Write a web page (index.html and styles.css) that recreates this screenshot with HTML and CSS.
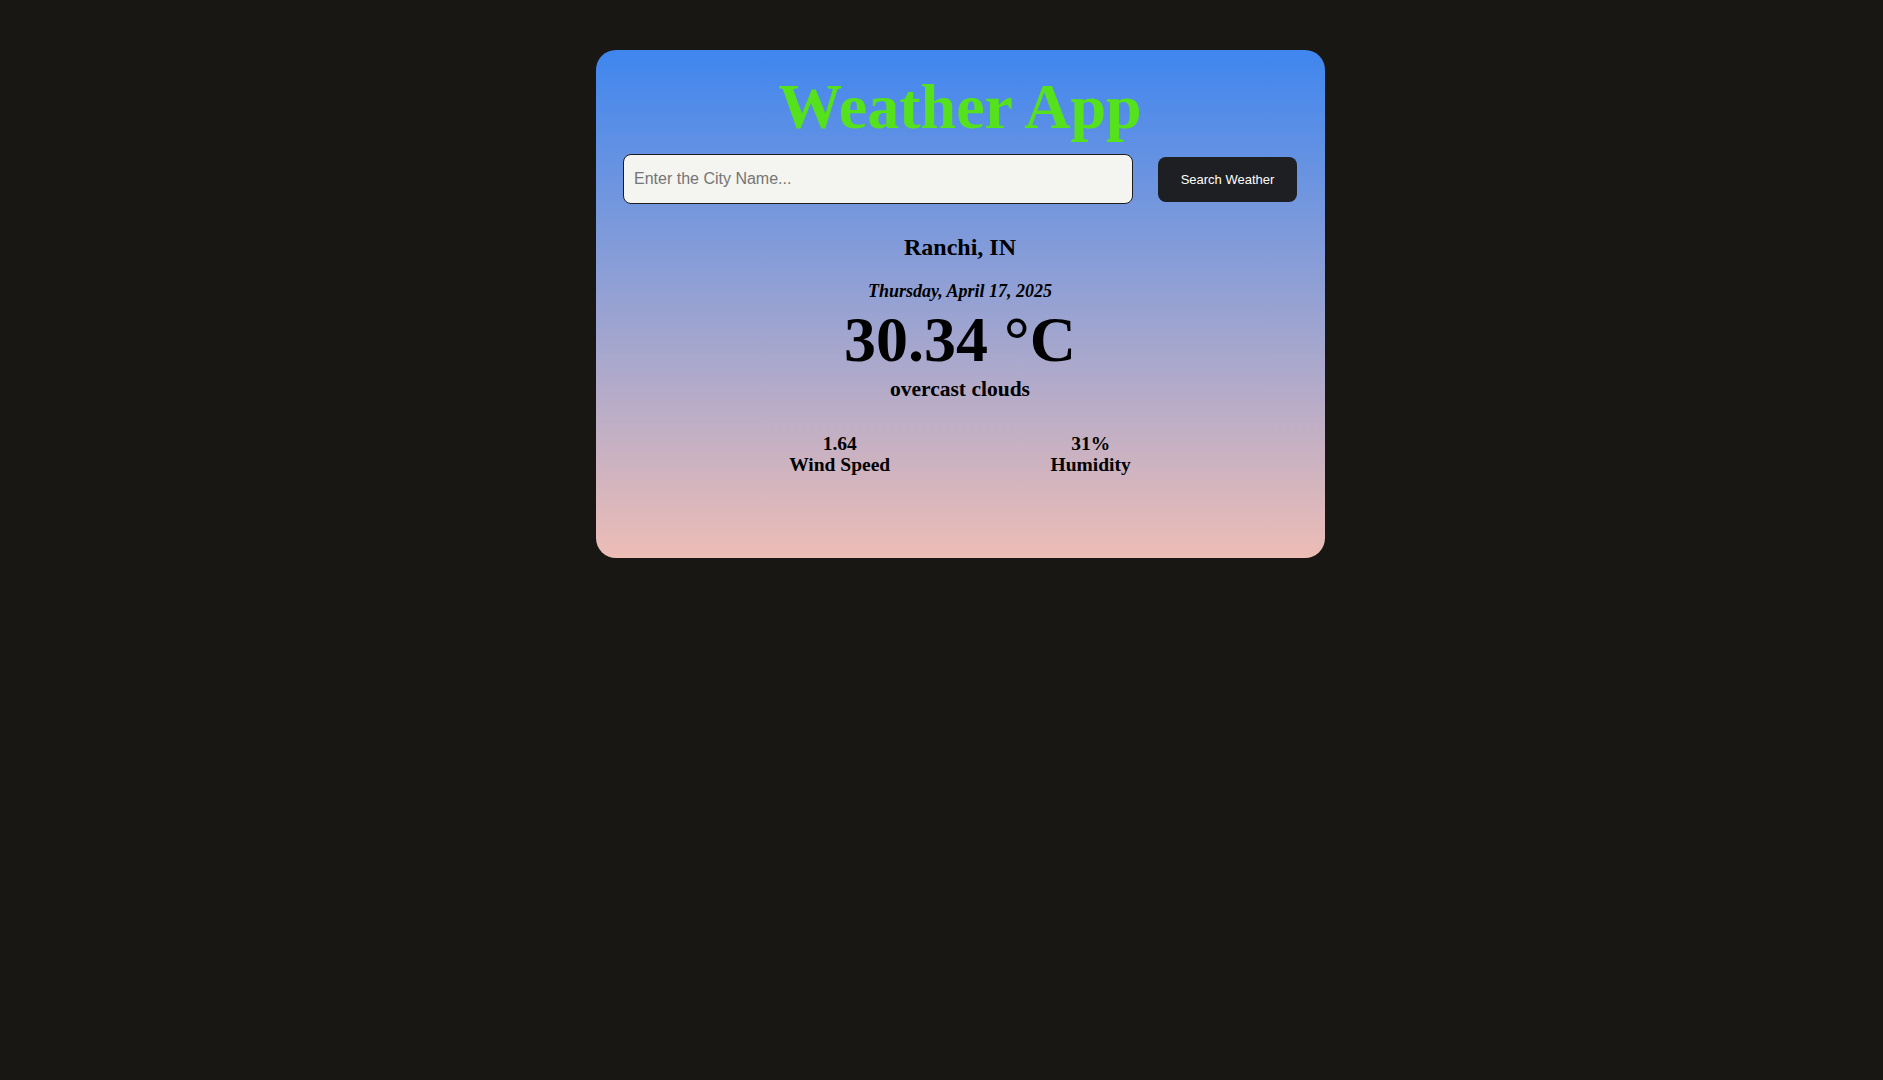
FILE: index.html
```html
<!DOCTYPE html>
<html lang="en">
<head>
<meta charset="UTF-8">
<title>Weather App</title>
<link rel="stylesheet" href="styles.css">
</head>
<body>
  <div class="card">
    <h1 class="title">Weather App</h1>
    <div class="search-row">
      <input class="city-input" type="text" placeholder="Enter the City Name...">
      <button class="search-btn">Search Weather</button>
    </div>
    <div class="weather">
      <h2 class="city">Ranchi, IN</h2>
      <p class="date">Thursday, April 17, 2025</p>
      <p class="temp">30.34 °C</p>
      <p class="desc">overcast clouds</p>
      <div class="stats">
        <div class="stat">
          <div class="stat-value">1.64</div>
          <div class="stat-label">Wind Speed</div>
        </div>
        <div class="stat">
          <div class="stat-value">31%</div>
          <div class="stat-label">Humidity</div>
        </div>
      </div>
    </div>
  </div>
</body>
</html>
```
FILE: styles.css
```css
html, body {
  margin: 0;
  padding: 0;
}
body {
  background: #181713;
  font-family: "Liberation Serif", "Times New Roman", serif;
  color: #000;
  min-height: 1080px;
}
.card {
  box-sizing: border-box;
  width: 729px;
  margin: 50px 0 0 596px;
  padding: 20px 28px 83px 27px;
  border-radius: 20px;
  background: linear-gradient(to bottom, #3f86ef 0%, #edbdb6 100%);
}
.title {
  margin: 0;
  text-align: center;
  font-size: 64px;
  font-weight: bold;
  color: #55e21d;
  line-height: normal;
}
.search-row {
  display: flex;
  align-items: center;
  gap: 25px;
  margin-top: 10px;
}
.city-input {
  box-sizing: border-box;
  width: 510px;
  height: 50px;
  padding: 0 10px;
  border: 1px solid #1c1c1c;
  border-radius: 8px;
  background: #f4f4f0;
  font-family: "Liberation Sans", Arial, sans-serif;
  font-size: 16px;
  color: #222;
  outline: none;
}
.city-input::placeholder {
  color: #757575;
}
.search-btn {
  box-sizing: border-box;
  width: 139px;
  height: 45px;
  border: none;
  border-radius: 8px;
  background: #1e1f22;
  color: #fff;
  font-family: "Liberation Sans", Arial, sans-serif;
  font-size: 13px;
  padding: 0;
}
.weather {
  text-align: center;
}
.city {
  margin: 30px 0 0;
  font-size: 24px;
  font-weight: bold;
  line-height: normal;
}
.date {
  margin: 20px 0 0;
  font-size: 18px;
  font-weight: bold;
  font-style: italic;
  line-height: normal;
}
.temp {
  margin: 1px 0 0;
  font-size: 64px;
  font-weight: bold;
  line-height: normal;
}
.desc {
  margin: 0;
  font-size: 21.5px;
  font-weight: bold;
  line-height: normal;
}
.stats {
  width: 502px;
  margin: 32px auto 0;
  display: flex;
  justify-content: space-around;
}
.stat {
  font-size: 19.5px;
  font-weight: bold;
  line-height: 20.7px;
}
```
